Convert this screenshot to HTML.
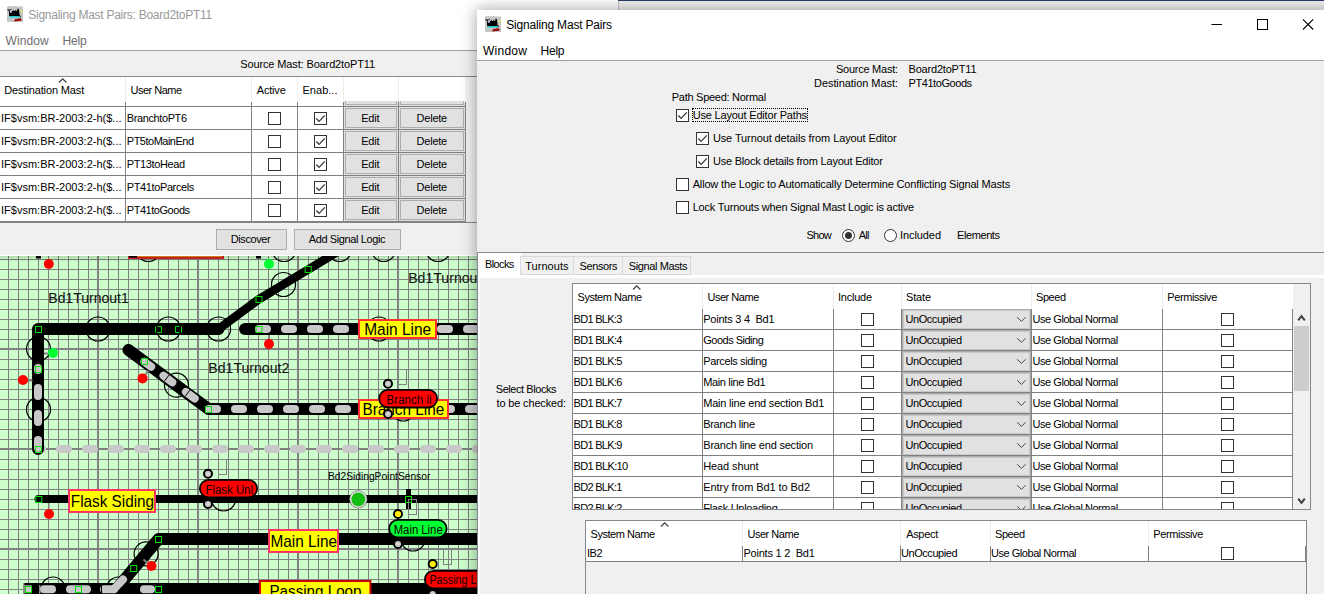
<!DOCTYPE html>
<html><head><meta charset="utf-8"><title>Signaling Mast Pairs</title>
<style>
html,body{margin:0;padding:0}
body{width:1324px;height:594px;overflow:hidden;position:relative;background:#fff;font-family:"Liberation Sans",sans-serif}
div{position:absolute}
.t{position:absolute;white-space:pre;line-height:1}
.cb{width:11px;height:11px;border:1px solid #333;background:#fff}
.rd{width:11px;height:11px;border:1px solid #333;background:#fff;border-radius:50%}
.rd i{position:absolute;left:2px;top:2px;width:7px;height:7px;border-radius:50%;background:#333}
#lay text{font-family:"Liberation Sans",sans-serif}
</style></head><body>
<div style="left:0px;top:0px;width:477px;height:30px;background:#fff;"></div>
<svg style="position:absolute;left:7px;top:6px" width="16" height="16" viewBox="0 0 16 16">
<rect width="16" height="16" fill="#c6c6c6"/>
<rect width="16" height="1" fill="#e4e4e4"/>
<path d="M1 0h1v.6h-1zM3.3 0h1v.6h-1zM5.6 0h1v.6h-1zM8 0h1.4v.6h-1.4z" fill="#8a8a8a"/>
<path d="M0.2 3h4.9v1h-4.9z" fill="#5a5a5a"/>
<path d="M0.8 4h2.4v1h-2.4zM10.2 2.7h1.6v.8h-1.6z" fill="#3a3a3a"/>
<path d="M2 6.8 L2.2 5 L3 5 L3 6.6 L4.7 6.6 L4.8 5 L5.7 5 L6.3 3.8 L7 5 L8 5 L8.7 3.8 L9.4 5 L10.2 5 L10.2 3.3 L12 3.3 L12.2 5.5 L12.6 8.8 L13.9 10.5 L13.4 11.2 L12 10.2 L2.2 10.2 Z" fill="#000"/>
<rect x="2.9" y="4.8" width="1.7" height="1.7" fill="#b9b9ff"/>
<rect x="13" y="5" width="3" height="1" fill="#f0f032"/>
<path d="M2.4 10.2h2.2v1.5h-2.2zM5.2 10.2h2.2v1.5h-2.2zM8 10.2h2.2v1.5h-2.2zM10.8 10.2h1.8v1.5h-1.8z" fill="#00e6e6"/>
<path d="M7.2 14.6 L8.4 13 L9.2 12.4 L10 13.4 L10.6 12.4 L12.4 12.2 L14.4 12.6 L14.6 14.8 L9 15.2 L7.4 15.6Z" fill="#a00c0c"/>
</svg>
<span class="t" style="left:28.3px;top:9px;font-size:12px;letter-spacing:-0.259px;color:#999;">Signaling Mast Pairs: Board2toPT11</span>
<div style="left:0px;top:30px;width:477px;height:20px;background:#fff;"></div>
<span class="t" style="left:5.5px;top:35px;font-size:12px;letter-spacing:0.108px;color:#6d6d6d;">Window</span>
<span class="t" style="left:62.5px;top:35px;font-size:12px;letter-spacing:-0.145px;color:#6d6d6d;">Help</span>
<div style="left:0px;top:50px;width:477px;height:1px;background:#a0a0a0;"></div>
<div style="left:0px;top:51px;width:477px;height:205px;background:#f0f0f0;"></div>
<span class="t" style="left:240.3px;top:59px;font-size:11px;letter-spacing:-0.133px;color:#000;">Source Mast: Board2toPT11</span>
<div style="left:0px;top:76px;width:477px;height:1px;background:#828790;"></div>
<div style="left:0px;top:77px;width:465px;height:25px;background:#fff;"></div>
<div style="left:125px;top:77px;width:1px;height:24px;background:#ececec;"></div>
<div style="left:251px;top:77px;width:1px;height:24px;background:#ececec;"></div>
<div style="left:297px;top:77px;width:1px;height:24px;background:#ececec;"></div>
<div style="left:343px;top:77px;width:1px;height:24px;background:#ececec;"></div>
<div style="left:398px;top:77px;width:1px;height:24px;background:#ececec;"></div>
<span class="t" style="left:4.3px;top:85px;font-size:11px;letter-spacing:-0.129px;color:#000;">Destination Mast</span>
<span class="t" style="left:130.5px;top:85px;font-size:11px;letter-spacing:-0.516px;color:#000;">User Name</span>
<span class="t" style="left:256.8px;top:85px;font-size:11px;letter-spacing:-0.191px;color:#000;">Active</span>
<span class="t" style="left:302.5px;top:85px;font-size:11px;letter-spacing:0.023px;color:#000;">Enab...</span>
<svg style="position:absolute;left:58px;top:77px" width="10" height="7" viewBox="0 0 10 7"><polyline points="1,5.5 4.7,1.8 8.4,5.5" fill="none" stroke="#3c3c3c" stroke-width="1.15"/></svg>
<div style="left:0px;top:101px;width:466px;height:121px;background:#fff;"></div>
<div style="left:344px;top:101px;width:121px;height:120px;background:#e1e1e1;"></div>
<div style="left:0px;top:106px;width:466px;height:1px;background:#808080;"></div>
<div style="left:0px;top:129px;width:466px;height:1px;background:#808080;"></div>
<div style="left:0px;top:152px;width:466px;height:1px;background:#808080;"></div>
<div style="left:0px;top:175px;width:466px;height:1px;background:#808080;"></div>
<div style="left:0px;top:198px;width:466px;height:1px;background:#808080;"></div>
<div style="left:0px;top:221px;width:466px;height:1px;background:#808080;"></div>
<div style="left:125px;top:102px;width:1px;height:120px;background:#808080;"></div>
<div style="left:251px;top:102px;width:1px;height:120px;background:#808080;"></div>
<div style="left:297px;top:102px;width:1px;height:120px;background:#808080;"></div>
<div style="left:343px;top:102px;width:1px;height:120px;background:#808080;"></div>
<div style="left:398px;top:102px;width:1px;height:120px;background:#808080;"></div>
<div style="left:465px;top:102px;width:1px;height:120px;background:#808080;"></div>
<div style="left:0px;top:222px;width:477px;height:1px;background:#828790;"></div>
<div style="left:345px;top:101px;width:52px;height:4px;background:#e1e1e1;border:1px solid #adadad;border-top:none;box-sizing:border-box"></div>
<div style="left:400px;top:101px;width:64px;height:4px;background:#e1e1e1;border:1px solid #adadad;border-top:none;box-sizing:border-box"></div>
<span class="t" style="left:1.0px;top:113px;font-size:11px;letter-spacing:0.003px;color:#000;">IF$vsm:BR-2003:2-h($...</span>
<span class="t" style="left:126.8px;top:113px;font-size:11px;letter-spacing:-0.395px;color:#000;">BranchtoPT6</span>
<div class="cb" style="left:268px;top:112px"></div>
<div class="cb" style="left:314px;top:112px"><svg width="13" height="13" viewBox="0 0 13 13" style="position:absolute;left:-1px;top:-1px"><polyline points="2.3,6.6 5.1,9.4 10.8,3.4" fill="none" stroke="#3a3a3a" stroke-width="1.35"/></svg></div>
<div style="left:345px;top:108px;width:52px;height:20px;background:#e1e1e1;border:1px solid #adadad;box-sizing:border-box"></div>
<div style="left:400px;top:108px;width:64px;height:20px;background:#e1e1e1;border:1px solid #adadad;box-sizing:border-box"></div>
<span class="t" style="left:361.2px;top:113px;font-size:11px;letter-spacing:-0.218px;color:#000;">Edit</span>
<span class="t" style="left:416.6px;top:113px;font-size:11px;letter-spacing:-0.240px;color:#000;">Delete</span>
<span class="t" style="left:1.0px;top:136px;font-size:11px;letter-spacing:0.003px;color:#000;">IF$vsm:BR-2003:2-h($...</span>
<span class="t" style="left:126.8px;top:136px;font-size:11px;letter-spacing:-0.501px;color:#000;">PT5toMainEnd</span>
<div class="cb" style="left:268px;top:135px"></div>
<div class="cb" style="left:314px;top:135px"><svg width="13" height="13" viewBox="0 0 13 13" style="position:absolute;left:-1px;top:-1px"><polyline points="2.3,6.6 5.1,9.4 10.8,3.4" fill="none" stroke="#3a3a3a" stroke-width="1.35"/></svg></div>
<div style="left:345px;top:131px;width:52px;height:20px;background:#e1e1e1;border:1px solid #adadad;box-sizing:border-box"></div>
<div style="left:400px;top:131px;width:64px;height:20px;background:#e1e1e1;border:1px solid #adadad;box-sizing:border-box"></div>
<span class="t" style="left:361.2px;top:136px;font-size:11px;letter-spacing:-0.218px;color:#000;">Edit</span>
<span class="t" style="left:416.6px;top:136px;font-size:11px;letter-spacing:-0.240px;color:#000;">Delete</span>
<span class="t" style="left:1.0px;top:159px;font-size:11px;letter-spacing:0.003px;color:#000;">IF$vsm:BR-2003:2-h($...</span>
<span class="t" style="left:126.8px;top:159px;font-size:11px;letter-spacing:-0.391px;color:#000;">PT13toHead</span>
<div class="cb" style="left:268px;top:158px"></div>
<div class="cb" style="left:314px;top:158px"><svg width="13" height="13" viewBox="0 0 13 13" style="position:absolute;left:-1px;top:-1px"><polyline points="2.3,6.6 5.1,9.4 10.8,3.4" fill="none" stroke="#3a3a3a" stroke-width="1.35"/></svg></div>
<div style="left:345px;top:154px;width:52px;height:20px;background:#e1e1e1;border:1px solid #adadad;box-sizing:border-box"></div>
<div style="left:400px;top:154px;width:64px;height:20px;background:#e1e1e1;border:1px solid #adadad;box-sizing:border-box"></div>
<span class="t" style="left:361.2px;top:159px;font-size:11px;letter-spacing:-0.218px;color:#000;">Edit</span>
<span class="t" style="left:416.6px;top:159px;font-size:11px;letter-spacing:-0.240px;color:#000;">Delete</span>
<span class="t" style="left:1.0px;top:182px;font-size:11px;letter-spacing:0.003px;color:#000;">IF$vsm:BR-2003:2-h($...</span>
<span class="t" style="left:126.8px;top:182px;font-size:11px;letter-spacing:-0.387px;color:#000;">PT41toParcels</span>
<div class="cb" style="left:268px;top:181px"></div>
<div class="cb" style="left:314px;top:181px"><svg width="13" height="13" viewBox="0 0 13 13" style="position:absolute;left:-1px;top:-1px"><polyline points="2.3,6.6 5.1,9.4 10.8,3.4" fill="none" stroke="#3a3a3a" stroke-width="1.35"/></svg></div>
<div style="left:345px;top:177px;width:52px;height:20px;background:#e1e1e1;border:1px solid #adadad;box-sizing:border-box"></div>
<div style="left:400px;top:177px;width:64px;height:20px;background:#e1e1e1;border:1px solid #adadad;box-sizing:border-box"></div>
<span class="t" style="left:361.2px;top:182px;font-size:11px;letter-spacing:-0.218px;color:#000;">Edit</span>
<span class="t" style="left:416.6px;top:182px;font-size:11px;letter-spacing:-0.240px;color:#000;">Delete</span>
<span class="t" style="left:1.0px;top:205px;font-size:11px;letter-spacing:0.003px;color:#000;">IF$vsm:BR-2003:2-h($...</span>
<span class="t" style="left:126.8px;top:205px;font-size:11px;letter-spacing:-0.462px;color:#000;">PT41toGoods</span>
<div class="cb" style="left:268px;top:204px"></div>
<div class="cb" style="left:314px;top:204px"><svg width="13" height="13" viewBox="0 0 13 13" style="position:absolute;left:-1px;top:-1px"><polyline points="2.3,6.6 5.1,9.4 10.8,3.4" fill="none" stroke="#3a3a3a" stroke-width="1.35"/></svg></div>
<div style="left:345px;top:200px;width:52px;height:20px;background:#e1e1e1;border:1px solid #adadad;box-sizing:border-box"></div>
<div style="left:400px;top:200px;width:64px;height:20px;background:#e1e1e1;border:1px solid #adadad;box-sizing:border-box"></div>
<span class="t" style="left:361.2px;top:205px;font-size:11px;letter-spacing:-0.218px;color:#000;">Edit</span>
<span class="t" style="left:416.6px;top:205px;font-size:11px;letter-spacing:-0.240px;color:#000;">Delete</span>
<div style="left:216px;top:229px;width:71px;height:21px;background:#e1e1e1;border:1px solid #adadad;box-sizing:border-box"></div>
<div style="left:294px;top:229px;width:107px;height:21px;background:#e1e1e1;border:1px solid #adadad;box-sizing:border-box"></div>
<span class="t" style="left:230.7px;top:234px;font-size:11px;letter-spacing:-0.399px;color:#000;">Discover</span>
<span class="t" style="left:308.8px;top:234px;font-size:11px;letter-spacing:-0.390px;color:#000;">Add Signal Logic</span>
<div style="left:0px;top:255px;width:477px;height:1px;background:#fff;"></div>
<svg id="lay" style="position:absolute;left:0px;top:256px" width="477" height="338" viewBox="0 256 477 338">
<rect x="0" y="256" width="477" height="338" fill="#ccffcc"/>
<path d="M8 256h1v338h-1zM18 256h1v338h-1zM28 256h1v338h-1zM38 256h1v338h-1zM48 256h1v338h-1zM58 256h1v338h-1zM68 256h1v338h-1zM78 256h1v338h-1zM88 256h1v338h-1zM98 256h1v338h-1zM108 256h1v338h-1zM118 256h1v338h-1zM128 256h1v338h-1zM138 256h1v338h-1zM148 256h1v338h-1zM158 256h1v338h-1zM168 256h1v338h-1zM178 256h1v338h-1zM188 256h1v338h-1zM198 256h1v338h-1zM208 256h1v338h-1zM218 256h1v338h-1zM228 256h1v338h-1zM238 256h1v338h-1zM248 256h1v338h-1zM258 256h1v338h-1zM268 256h1v338h-1zM278 256h1v338h-1zM288 256h1v338h-1zM298 256h1v338h-1zM308 256h1v338h-1zM318 256h1v338h-1zM328 256h1v338h-1zM338 256h1v338h-1zM348 256h1v338h-1zM358 256h1v338h-1zM368 256h1v338h-1zM378 256h1v338h-1zM388 256h1v338h-1zM398 256h1v338h-1zM408 256h1v338h-1zM418 256h1v338h-1zM428 256h1v338h-1zM438 256h1v338h-1zM448 256h1v338h-1zM458 256h1v338h-1zM468 256h1v338h-1zM0 259h477v1h-477zM0 269h477v1h-477zM0 279h477v1h-477zM0 289h477v1h-477zM0 299h477v1h-477zM0 309h477v1h-477zM0 319h477v1h-477zM0 329h477v1h-477zM0 339h477v1h-477zM0 349h477v1h-477zM0 359h477v1h-477zM0 369h477v1h-477zM0 379h477v1h-477zM0 389h477v1h-477zM0 399h477v1h-477zM0 409h477v1h-477zM0 419h477v1h-477zM0 429h477v1h-477zM0 439h477v1h-477zM0 449h477v1h-477zM0 459h477v1h-477zM0 469h477v1h-477zM0 479h477v1h-477zM0 489h477v1h-477zM0 499h477v1h-477zM0 509h477v1h-477zM0 519h477v1h-477zM0 529h477v1h-477zM0 539h477v1h-477zM0 549h477v1h-477zM0 559h477v1h-477zM0 569h477v1h-477zM0 579h477v1h-477zM0 589h477v1h-477zM97 256h1v338h-1zM197 256h1v338h-1zM297 256h1v338h-1zM397 256h1v338h-1zM0 348h477v1h-477zM0 448h477v1h-477zM0 548h477v1h-477z" fill="#808080" shape-rendering="crispEdges"/>
<line x1="40" y1="449" x2="42" y2="449" stroke="#c8c8c8" stroke-width="8" stroke-linecap="round"/>
<line x1="60" y1="449.0" x2="68" y2="449.0" stroke="#c8c8c8" stroke-width="8" stroke-linecap="round"/>
<line x1="86" y1="449.0" x2="94" y2="449.0" stroke="#c8c8c8" stroke-width="8" stroke-linecap="round"/>
<line x1="112" y1="449.0" x2="120" y2="449.0" stroke="#c8c8c8" stroke-width="8" stroke-linecap="round"/>
<line x1="138" y1="449.0" x2="146" y2="449.0" stroke="#c8c8c8" stroke-width="8" stroke-linecap="round"/>
<line x1="164" y1="449.0" x2="172" y2="449.0" stroke="#c8c8c8" stroke-width="8" stroke-linecap="round"/>
<line x1="190" y1="449.0" x2="198" y2="449.0" stroke="#c8c8c8" stroke-width="8" stroke-linecap="round"/>
<line x1="216" y1="449.0" x2="224" y2="449.0" stroke="#c8c8c8" stroke-width="8" stroke-linecap="round"/>
<line x1="242" y1="449.0" x2="250" y2="449.0" stroke="#c8c8c8" stroke-width="8" stroke-linecap="round"/>
<line x1="268" y1="449.0" x2="276" y2="449.0" stroke="#c8c8c8" stroke-width="8" stroke-linecap="round"/>
<line x1="294" y1="449.0" x2="302" y2="449.0" stroke="#c8c8c8" stroke-width="8" stroke-linecap="round"/>
<line x1="320" y1="449.0" x2="328" y2="449.0" stroke="#c8c8c8" stroke-width="8" stroke-linecap="round"/>
<line x1="346" y1="449.0" x2="354" y2="449.0" stroke="#c8c8c8" stroke-width="8" stroke-linecap="round"/>
<line x1="372" y1="449.0" x2="380" y2="449.0" stroke="#c8c8c8" stroke-width="8" stroke-linecap="round"/>
<line x1="398" y1="449.0" x2="406" y2="449.0" stroke="#c8c8c8" stroke-width="8" stroke-linecap="round"/>
<line x1="424" y1="449.0" x2="432" y2="449.0" stroke="#c8c8c8" stroke-width="8" stroke-linecap="round"/>
<line x1="450" y1="449.0" x2="458" y2="449.0" stroke="#c8c8c8" stroke-width="8" stroke-linecap="round"/>
<line x1="476" y1="449.0" x2="484" y2="449.0" stroke="#c8c8c8" stroke-width="8" stroke-linecap="round"/>
<circle cx="98" cy="329" r="12" fill="none" stroke="#000" stroke-width="1.2"/>
<circle cx="168.4" cy="329" r="12" fill="none" stroke="#000" stroke-width="1.2"/>
<circle cx="218.6" cy="329" r="12" fill="none" stroke="#000" stroke-width="1.2"/>
<circle cx="38.5" cy="348.8" r="12" fill="none" stroke="#000" stroke-width="1.2"/>
<circle cx="38.5" cy="409.5" r="12" fill="none" stroke="#000" stroke-width="1.2"/>
<circle cx="283.5" cy="284.5" r="12" fill="none" stroke="#000" stroke-width="1.2"/>
<circle cx="379" cy="329" r="12" fill="none" stroke="#000" stroke-width="1.2"/>
<circle cx="176.5" cy="385.2" r="12" fill="none" stroke="#000" stroke-width="1.2"/>
<circle cx="403.3" cy="409" r="12" fill="none" stroke="#000" stroke-width="1.2"/>
<circle cx="223.6" cy="499" r="12" fill="none" stroke="#000" stroke-width="1.2"/>
<circle cx="413" cy="539" r="12" fill="none" stroke="#000" stroke-width="1.2"/>
<circle cx="53" cy="589" r="12" fill="none" stroke="#000" stroke-width="1.2"/>
<circle cx="118.5" cy="589" r="12" fill="none" stroke="#000" stroke-width="1.2"/>
<circle cx="146.1" cy="553.8" r="12" fill="none" stroke="#000" stroke-width="1.2"/>
<circle cx="148.4" cy="249.5" r="12" fill="none" stroke="#000" stroke-width="1.2"/>
<circle cx="284" cy="249.5" r="12" fill="none" stroke="#000" stroke-width="1.2"/>
<circle cx="339.4" cy="249.5" r="12" fill="none" stroke="#000" stroke-width="1.2"/>
<circle cx="383.6" cy="249.5" r="12" fill="none" stroke="#000" stroke-width="1.2"/>
<circle cx="438" cy="249.5" r="12" fill="none" stroke="#000" stroke-width="1.2"/>
<rect x="36" y="256" width="5" height="2.5" fill="#000"/>
<rect x="256" y="256" width="5" height="2.5" fill="#000"/>
<polyline points="38,449 38,329 218.6,329" fill="none" stroke="#000" stroke-width="12" stroke-linecap="round" stroke-linejoin="round"/>
<polyline points="218.6,329 258.5,299.5 308,269.6 345,247.3" fill="none" stroke="#000" stroke-width="8.6" stroke-linecap="round" stroke-linejoin="round"/>
<line x1="38" y1="368" x2="38" y2="370" stroke="#c8c8c8" stroke-width="8" stroke-linecap="round"/>
<line x1="38" y1="388" x2="38" y2="396" stroke="#c8c8c8" stroke-width="8" stroke-linecap="round"/>
<line x1="38" y1="414" x2="38" y2="422" stroke="#c8c8c8" stroke-width="8" stroke-linecap="round"/>
<line x1="38" y1="440" x2="38" y2="448" stroke="#c8c8c8" stroke-width="8" stroke-linecap="round"/>
<polyline points="245,329 480,329" fill="none" stroke="#000" stroke-width="12" stroke-linecap="round" stroke-linejoin="round"/>
<line x1="259" y1="329" x2="267" y2="329" stroke="#c8c8c8" stroke-width="8" stroke-linecap="round"/>
<line x1="285" y1="329" x2="293" y2="329" stroke="#c8c8c8" stroke-width="8" stroke-linecap="round"/>
<line x1="311" y1="329" x2="319" y2="329" stroke="#c8c8c8" stroke-width="8" stroke-linecap="round"/>
<line x1="337" y1="329" x2="345" y2="329" stroke="#c8c8c8" stroke-width="8" stroke-linecap="round"/>
<line x1="363" y1="329" x2="371" y2="329" stroke="#c8c8c8" stroke-width="8" stroke-linecap="round"/>
<line x1="389" y1="329" x2="397" y2="329" stroke="#c8c8c8" stroke-width="8" stroke-linecap="round"/>
<line x1="415" y1="329" x2="423" y2="329" stroke="#c8c8c8" stroke-width="8" stroke-linecap="round"/>
<line x1="441" y1="329" x2="449" y2="329" stroke="#c8c8c8" stroke-width="8" stroke-linecap="round"/>
<line x1="467" y1="329" x2="475" y2="329" stroke="#c8c8c8" stroke-width="8" stroke-linecap="round"/>
<polyline points="128.5,350 208.5,409 480,409" fill="none" stroke="#000" stroke-width="12" stroke-linecap="round" stroke-linejoin="round"/>
<line x1="209" y1="409" x2="217" y2="409" stroke="#c8c8c8" stroke-width="8" stroke-linecap="round"/>
<line x1="235" y1="409" x2="243" y2="409" stroke="#c8c8c8" stroke-width="8" stroke-linecap="round"/>
<line x1="261" y1="409" x2="269" y2="409" stroke="#c8c8c8" stroke-width="8" stroke-linecap="round"/>
<line x1="287" y1="409" x2="295" y2="409" stroke="#c8c8c8" stroke-width="8" stroke-linecap="round"/>
<line x1="313" y1="409" x2="321" y2="409" stroke="#c8c8c8" stroke-width="8" stroke-linecap="round"/>
<line x1="339" y1="409" x2="347" y2="409" stroke="#c8c8c8" stroke-width="8" stroke-linecap="round"/>
<line x1="365" y1="409" x2="373" y2="409" stroke="#c8c8c8" stroke-width="8" stroke-linecap="round"/>
<line x1="391" y1="409" x2="399" y2="409" stroke="#c8c8c8" stroke-width="8" stroke-linecap="round"/>
<line x1="417" y1="409" x2="425" y2="409" stroke="#c8c8c8" stroke-width="8" stroke-linecap="round"/>
<line x1="443" y1="409" x2="451" y2="409" stroke="#c8c8c8" stroke-width="8" stroke-linecap="round"/>
<line x1="469" y1="409" x2="477" y2="409" stroke="#c8c8c8" stroke-width="8" stroke-linecap="round"/>
<line x1="144.38" y1="361.67" x2="151.22" y2="366.73" stroke="#c8c8c8" stroke-width="8" stroke-linecap="round"/>
<line x1="163.48" y1="375.73" x2="172.32" y2="382.27" stroke="#c8c8c8" stroke-width="8" stroke-linecap="round"/>
<line x1="185.88" y1="391.93" x2="194.72" y2="398.47" stroke="#c8c8c8" stroke-width="8" stroke-linecap="round"/>
<line x1="164.5" y1="381" x2="169.5" y2="374.5" stroke="#000" stroke-width="1"/>
<line x1="185" y1="396.5" x2="190" y2="390" stroke="#000" stroke-width="1"/>
<polyline points="38.5,499 480,499" fill="none" stroke="#000" stroke-width="8" stroke-linecap="round" stroke-linejoin="round"/>
<polyline points="116.5,589 158.5,539 480,539" fill="none" stroke="#000" stroke-width="12" stroke-linecap="round" stroke-linejoin="round"/>
<rect x="23" y="583" width="460" height="12" fill="#000"/>
<rect x="23" y="583" width="1.5" height="12" fill="#909090"/>
<rect x="24.5" y="585.3" width="7" height="8" fill="#c8c8c8"/>
<line x1="44" y1="589.3" x2="52" y2="589.3" stroke="#c8c8c8" stroke-width="8" stroke-linecap="round"/>
<line x1="70" y1="589.3" x2="87" y2="589.3" stroke="#c8c8c8" stroke-width="8" stroke-linecap="round"/>
<line x1="104" y1="589.3" x2="114" y2="589.3" stroke="#c8c8c8" stroke-width="8" stroke-linecap="round"/>
<line x1="144" y1="589.3" x2="151" y2="589.3" stroke="#c8c8c8" stroke-width="8" stroke-linecap="round"/>
<line x1="114" y1="589" x2="123" y2="579.5" stroke="#c8c8c8" stroke-width="8" stroke-linecap="round"/>
<line x1="39.8" y1="585" x2="39.8" y2="594" stroke="#c8c8c8" stroke-width="1"/>
<line x1="101.5" y1="585" x2="101.5" y2="594" stroke="#000" stroke-width="1"/>
<rect x="128" y="253" width="96" height="6" fill="#d82020"/><rect x="130" y="253" width="92" height="3.6" fill="#e8d820"/><rect x="129" y="256" width="8" height="1.6" fill="#000"/>
<rect x="35.5" y="326.5" width="6" height="6" fill="none" stroke="#00e000" stroke-width="1"/>
<rect x="35.5" y="366.5" width="6" height="6" fill="none" stroke="#00e000" stroke-width="1"/>
<rect x="35.5" y="446.5" width="6" height="6" fill="none" stroke="#00e000" stroke-width="1"/>
<rect x="141.5" y="358.5" width="6" height="6" fill="none" stroke="#00e000" stroke-width="1"/>
<rect x="205.5" y="406.5" width="6" height="6" fill="none" stroke="#00e000" stroke-width="1"/>
<rect x="256" y="296.5" width="6" height="6" fill="none" stroke="#00e000" stroke-width="1"/>
<rect x="305.2" y="266.5" width="6" height="6" fill="none" stroke="#00e000" stroke-width="1"/>
<rect x="256" y="326.5" width="6" height="6" fill="none" stroke="#00e000" stroke-width="1"/>
<rect x="35.8" y="496.5" width="6" height="6" fill="none" stroke="#00e000" stroke-width="1"/>
<rect x="155.5" y="536.5" width="6" height="6" fill="none" stroke="#00e000" stroke-width="1"/>
<rect x="130.7" y="565.5" width="6" height="6" fill="none" stroke="#00e000" stroke-width="1"/>
<rect x="25.5" y="586.5" width="6" height="6" fill="none" stroke="#00e000" stroke-width="1"/>
<rect x="75.5" y="586.5" width="6" height="6" fill="none" stroke="#00e000" stroke-width="1"/>
<rect x="155.5" y="586.5" width="6" height="6" fill="none" stroke="#00e000" stroke-width="1"/>
<rect x="405.5" y="496.5" width="6" height="6" fill="none" stroke="#00e000" stroke-width="1"/>
<path d="M155.5 326.5v6M157.5 326.5h4v6h-4" fill="none" stroke="#00e000" stroke-width="1"/>
<path d="M181.5 326.5v6M179.5 326.5h-4v6h4" fill="none" stroke="#00e000" stroke-width="1"/>
<line x1="44" y1="353.5" x2="49" y2="353.5" stroke="#808080" stroke-width="2"/>
<circle cx="53" cy="353" r="5" fill="#00ff33"/>
<line x1="27" y1="380.5" x2="32.5" y2="380.5" stroke="#808080" stroke-width="2"/>
<circle cx="23" cy="380" r="5" fill="#ff0000"/>
<circle cx="48.8" cy="264" r="5" fill="#ff0000"/>
<circle cx="269" cy="264" r="5" fill="#00ff33"/>
<line x1="269" y1="335" x2="269" y2="340" stroke="#808080" stroke-width="2"/>
<circle cx="269" cy="344" r="5" fill="#ff0000"/>
<line x1="145.5" y1="374.5" x2="148.3" y2="370.5" stroke="#808080" stroke-width="2"/>
<circle cx="142.5" cy="378.4" r="5" fill="#ff0000"/>
<line x1="49" y1="503" x2="49" y2="510" stroke="#808080" stroke-width="1"/>
<circle cx="49" cy="514" r="5" fill="#ff0000"/>
<line x1="143.5" y1="559.5" x2="148" y2="563.5" stroke="#808080" stroke-width="2"/>
<circle cx="151.5" cy="566" r="5" fill="#ff0000"/>
<rect x="406" y="489" width="5" height="20" fill="#000"/>
<rect x="405.5" y="496.5" width="6" height="6" fill="none" stroke="#00e000" stroke-width="1"/>
<path d="M398.5 369.5h8v15h-8" fill="none" stroke="#808080" stroke-width="1"/>
<path d="M218.5 459.5h8v15h-8" fill="none" stroke="#808080" stroke-width="1"/>
<rect x="408.5" y="499.5" width="8" height="15" fill="none" stroke="#808080" stroke-width="1"/>
<rect x="443.5" y="549.5" width="8" height="15" fill="none" stroke="#808080" stroke-width="1"/>
<rect x="359.0" y="320.0" width="77" height="18" fill="#ffff00" stroke="#ff3333" stroke-width="2"/>
<text x="364.2" y="335" font-size="16.2" fill="#000" textLength="67" lengthAdjust="spacingAndGlyphs">Main Line</text>
<rect x="359.0" y="400.0" width="89" height="18" fill="#ffff00" stroke="#ff3333" stroke-width="2"/>
<text x="362.5" y="415" font-size="16.2" fill="#000" textLength="81.8" lengthAdjust="spacingAndGlyphs">Branch Line</text>
<rect x="69.0" y="490.0" width="86" height="22" fill="#ffff00" stroke="#ff3366" stroke-width="2"/>
<text x="70.8" y="507" font-size="16.2" fill="#000" textLength="83.3" lengthAdjust="spacingAndGlyphs">Flask Siding</text>
<rect x="269.0" y="530.0" width="69" height="22" fill="#ffff00" stroke="#ff3366" stroke-width="2"/>
<text x="270.4" y="546.5" font-size="16.2" fill="#000" textLength="66.6" lengthAdjust="spacingAndGlyphs">Main Line</text>
<rect x="260.0" y="581.0" width="110.4" height="18" fill="#ffff00" stroke="#cc0000" stroke-width="2"/>
<text x="269.5" y="597" font-size="16.2" fill="#000" textLength="92" lengthAdjust="spacingAndGlyphs">Passing Loop</text>
<text x="48.3" y="302.5" font-size="14" fill="#111" textLength="80.5" lengthAdjust="spacingAndGlyphs">Bd1Turnout1</text>
<text x="208.3" y="372.5" font-size="14" fill="#111" textLength="81" lengthAdjust="spacingAndGlyphs">Bd1Turnout2</text>
<text x="408.2" y="282.5" font-size="14" fill="#111" textLength="81" lengthAdjust="spacingAndGlyphs">Bd1Turnout3</text>
<text x="328" y="480" font-size="11" fill="#000" textLength="102.3" lengthAdjust="spacingAndGlyphs">Bd2SidingPointSensor</text>
<circle cx="358.3" cy="499.3" r="9" fill="#707870"/>
<circle cx="358.3" cy="499.3" r="8.4" fill="#dcdcdc"/>
<circle cx="358.3" cy="499.3" r="6.9" fill="#12be12"/>
<circle cx="388" cy="383.8" r="4.05" fill="#c0c0c0" stroke="#000" stroke-width="1.9"/>
<path d="M386 383.8L388 381.8L390 383.8L388 385.8z" fill="#d8d8d8"/>
<circle cx="388" cy="414" r="4.05" fill="#c0c0c0" stroke="#000" stroke-width="1.9"/>
<path d="M386 414L388 412L390 414L388 416z" fill="#d8d8d8"/>
<rect x="379.2" y="389.9" width="57.900000000000006" height="17.599999999999998" rx="8.799999999999999" fill="#ff0000" stroke="#000" stroke-width="1.8"/>
<text x="386.6" y="403.7" font-size="12" fill="#100" textLength="45" lengthAdjust="spacingAndGlyphs">Branch li</text>
<circle cx="208" cy="473.8" r="4.05" fill="#c0c0c0" stroke="#000" stroke-width="1.9"/>
<path d="M206 473.8L208 471.8L210 473.8L208 475.8z" fill="#d8d8d8"/>
<circle cx="208" cy="504" r="4.05" fill="#c0c0c0" stroke="#000" stroke-width="1.9"/>
<path d="M206 504L208 502L210 504L208 506z" fill="#d8d8d8"/>
<rect x="199.9" y="479.9" width="57.2" height="17.599999999999998" rx="8.799999999999999" fill="#ff0000" stroke="#000" stroke-width="1.8"/>
<text x="205.5" y="493.7" font-size="12" fill="#100" textLength="47.5" lengthAdjust="spacingAndGlyphs">Flask Unl</text>
<circle cx="398" cy="514" r="4.05" fill="#ffee00" stroke="#000" stroke-width="1.9"/>
<circle cx="398" cy="544" r="4.05" fill="#c0c0c0" stroke="#000" stroke-width="1.9"/>
<path d="M396 544L398 542L400 544L398 546z" fill="#d8d8d8"/>
<rect x="389.2" y="519.9" width="57.400000000000006" height="17.599999999999998" rx="8.799999999999999" fill="#00ff33" stroke="#000" stroke-width="1.8"/>
<text x="393.7" y="533.6" font-size="12" fill="#100" textLength="49" lengthAdjust="spacingAndGlyphs">Main Line</text>
<circle cx="432.7" cy="564" r="4.05" fill="#ffee00" stroke="#000" stroke-width="1.9"/>
<circle cx="432.7" cy="594" r="4.05" fill="#c0c0c0" stroke="#000" stroke-width="1.9"/>
<path d="M430.7 594L432.7 592L434.7 594L432.7 596z" fill="#d8d8d8"/>
<rect x="424.9" y="570.9" width="68.2" height="17.599999999999998" rx="8.799999999999999" fill="#ff0000" stroke="#000" stroke-width="1.8"/>
<text x="429.4" y="583.8" font-size="12" fill="#100" textLength="47" lengthAdjust="spacingAndGlyphs">Passing L</text>
<defs><linearGradient id="tsh" x1="0" y1="0" x2="0" y2="1"><stop offset="0" stop-color="#000" stop-opacity=".13"/><stop offset="1" stop-color="#000" stop-opacity="0"/></linearGradient></defs><rect x="0" y="256" width="477" height="6" fill="url(#tsh)"/>
</svg>
<div style="left:618px;top:0px;width:706px;height:10px;background:#f2f2f2;"></div>
<div style="left:618px;top:0px;width:1px;height:10px;background:#c8c8c8;"></div>
<div style="left:618px;top:0px;width:706px;height:1px;background:#2b3a6b;"></div>
<div id="rw" style="left:477px;top:10px;width:860px;height:600px;background:#f0f0f0;box-shadow:0 0 14px 1px rgba(0,0,0,.34)">
</div>
<div style="left:477px;top:10px;width:847px;height:50px;background:#fff;"></div>
<svg style="position:absolute;left:485px;top:16px" width="16" height="16" viewBox="0 0 16 16">
<rect width="16" height="16" fill="#c6c6c6"/>
<rect width="16" height="1" fill="#e4e4e4"/>
<path d="M1 0h1v.6h-1zM3.3 0h1v.6h-1zM5.6 0h1v.6h-1zM8 0h1.4v.6h-1.4z" fill="#8a8a8a"/>
<path d="M0.2 3h4.9v1h-4.9z" fill="#5a5a5a"/>
<path d="M0.8 4h2.4v1h-2.4zM10.2 2.7h1.6v.8h-1.6z" fill="#3a3a3a"/>
<path d="M2 6.8 L2.2 5 L3 5 L3 6.6 L4.7 6.6 L4.8 5 L5.7 5 L6.3 3.8 L7 5 L8 5 L8.7 3.8 L9.4 5 L10.2 5 L10.2 3.3 L12 3.3 L12.2 5.5 L12.6 8.8 L13.9 10.5 L13.4 11.2 L12 10.2 L2.2 10.2 Z" fill="#000"/>
<rect x="2.9" y="4.8" width="1.7" height="1.7" fill="#b9b9ff"/>
<rect x="13" y="5" width="3" height="1" fill="#f0f032"/>
<path d="M2.4 10.2h2.2v1.5h-2.2zM5.2 10.2h2.2v1.5h-2.2zM8 10.2h2.2v1.5h-2.2zM10.8 10.2h1.8v1.5h-1.8z" fill="#00e6e6"/>
<path d="M7.2 14.6 L8.4 13 L9.2 12.4 L10 13.4 L10.6 12.4 L12.4 12.2 L14.4 12.6 L14.6 14.8 L9 15.2 L7.4 15.6Z" fill="#a00c0c"/>
</svg>
<span class="t" style="left:506.3px;top:19px;font-size:12px;letter-spacing:-0.191px;color:#000;">Signaling Mast Pairs</span>
<span class="t" style="left:483.0px;top:45px;font-size:12px;letter-spacing:0.258px;color:#000;">Window</span>
<span class="t" style="left:540.5px;top:45px;font-size:12px;letter-spacing:-0.228px;color:#000;">Help</span>
<div style="left:477px;top:60px;width:847px;height:1px;background:#a0a0a0;"></div>
<svg style="position:absolute;left:1200px;top:10px" width="124" height="30" viewBox="0 0 124 30">
<line x1="11.5" y1="14.5" x2="22" y2="14.5" stroke="#000" stroke-width="1"/>
<rect x="57.5" y="9.5" width="10" height="10" fill="none" stroke="#000" stroke-width="1"/>
<path d="M103 9.3 L113.2 19.5 M113.2 9.3 L103 19.5" stroke="#000" stroke-width="1.1" fill="none"/>
</svg>
<span class="t" style="left:836.0px;top:64px;font-size:11px;letter-spacing:-0.255px;color:#000;">Source Mast:</span>
<span class="t" style="left:908.5px;top:64px;font-size:11px;letter-spacing:-0.193px;color:#000;">Board2toPT11</span>
<span class="t" style="left:814.0px;top:78px;font-size:11px;letter-spacing:-0.062px;color:#000;">Destination Mast:</span>
<span class="t" style="left:908.5px;top:78px;font-size:11px;letter-spacing:-0.427px;color:#000;">PT41toGoods</span>
<span class="t" style="left:671.8px;top:92px;font-size:11px;letter-spacing:-0.280px;color:#000;">Path Speed: Normal</span>
<div class="cb" style="left:676px;top:109px"><svg width="13" height="13" viewBox="0 0 13 13" style="position:absolute;left:-1px;top:-1px"><polyline points="2.3,6.6 5.1,9.4 10.8,3.4" fill="none" stroke="#3a3a3a" stroke-width="1.35"/></svg></div>
<span class="t" style="left:692.7px;top:110px;font-size:11px;letter-spacing:-0.192px;color:#000;">Use Layout Editor Paths</span>
<div style="left:692px;top:108px;width:116px;height:14px;border:1px dotted #000;box-sizing:border-box"></div>
<div class="cb" style="left:696px;top:132px"><svg width="13" height="13" viewBox="0 0 13 13" style="position:absolute;left:-1px;top:-1px"><polyline points="2.3,6.6 5.1,9.4 10.8,3.4" fill="none" stroke="#3a3a3a" stroke-width="1.35"/></svg></div>
<span class="t" style="left:712.9px;top:133px;font-size:11px;letter-spacing:-0.106px;color:#000;">Use Turnout details from Layout Editor</span>
<div class="cb" style="left:696px;top:155px"><svg width="13" height="13" viewBox="0 0 13 13" style="position:absolute;left:-1px;top:-1px"><polyline points="2.3,6.6 5.1,9.4 10.8,3.4" fill="none" stroke="#3a3a3a" stroke-width="1.35"/></svg></div>
<span class="t" style="left:712.9px;top:156px;font-size:11px;letter-spacing:-0.209px;color:#000;">Use Block details from Layout Editor</span>
<div class="cb" style="left:676px;top:178px"></div>
<span class="t" style="left:692.7px;top:179px;font-size:11px;letter-spacing:-0.164px;color:#000;">Allow the Logic to Automatically Determine Conflicting Signal Masts</span>
<div class="cb" style="left:676px;top:201px"></div>
<span class="t" style="left:692.7px;top:202px;font-size:11px;letter-spacing:-0.214px;color:#000;">Lock Turnouts when Signal Mast Logic is active</span>
<span class="t" style="left:806.5px;top:230px;font-size:11px;letter-spacing:-0.781px;color:#000;">Show</span>
<div class="rd" style="left:842px;top:229px"><i></i></div>
<span class="t" style="left:858.7px;top:230px;font-size:11px;letter-spacing:-0.761px;color:#000;">All</span>
<div class="rd" style="left:884px;top:229px"></div>
<span class="t" style="left:900.0px;top:230px;font-size:11px;letter-spacing:-0.084px;color:#000;">Included</span>
<span class="t" style="left:957.0px;top:230px;font-size:11px;letter-spacing:-0.407px;color:#000;">Elements</span>
<div style="left:477px;top:252px;width:847px;height:1px;background:#828790;"></div>
<div style="left:477px;top:252px;width:1px;height:342px;background:#828790;"></div>
<div style="left:478px;top:253px;width:846px;height:341px;background:#fff;"></div>
<div style="left:521px;top:253px;width:803px;height:22px;background:#f0f0f0;"></div>
<div style="left:480px;top:278px;width:844px;height:316px;background:#f0f0f0;"></div>
<div style="left:520px;top:256px;width:54px;height:19px;background:#f0f0f0;border:1px solid #d9d9d9;box-sizing:border-box"></div>
<div style="left:573px;top:256px;width:50px;height:19px;background:#f0f0f0;border:1px solid #d9d9d9;box-sizing:border-box"></div>
<div style="left:622px;top:256px;width:69px;height:19px;background:#f0f0f0;border:1px solid #d9d9d9;box-sizing:border-box"></div>
<span class="t" style="left:485.1px;top:259px;font-size:11px;letter-spacing:-0.639px;color:#000;">Blocks</span>
<span class="t" style="left:525.2px;top:261px;font-size:11px;letter-spacing:0.057px;color:#000;">Turnouts</span>
<span class="t" style="left:579.5px;top:261px;font-size:11px;letter-spacing:-0.391px;color:#000;">Sensors</span>
<span class="t" style="left:628.8px;top:261px;font-size:11px;letter-spacing:-0.384px;color:#000;">Signal Masts</span>
<span class="t" style="left:495.8px;top:384px;font-size:11px;letter-spacing:-0.444px;color:#000;">Select Blocks</span>
<span class="t" style="left:496.5px;top:398px;font-size:11px;letter-spacing:-0.157px;color:#000;">to be checked:</span>
<div style="left:572px;top:283px;width:739px;height:227px;background:#f0f0f0;border:1px solid #828790;box-sizing:border-box"></div>
<div style="left:573px;top:284px;width:720px;height:25px;background:#fff;"></div>
<div style="left:702px;top:284px;width:1px;height:24px;background:#ececec;"></div>
<div style="left:833px;top:284px;width:1px;height:24px;background:#ececec;"></div>
<div style="left:901px;top:284px;width:1px;height:24px;background:#ececec;"></div>
<div style="left:1031px;top:284px;width:1px;height:24px;background:#ececec;"></div>
<div style="left:1162px;top:284px;width:1px;height:24px;background:#ececec;"></div>
<svg style="position:absolute;left:632px;top:284px" width="10" height="7" viewBox="0 0 10 7"><polyline points="1,5.5 4.7,1.8 8.4,5.5" fill="none" stroke="#3c3c3c" stroke-width="1.15"/></svg>
<span class="t" style="left:577.5px;top:292px;font-size:11px;letter-spacing:-0.457px;color:#000;">System Name</span>
<span class="t" style="left:707.5px;top:292px;font-size:11px;letter-spacing:-0.485px;color:#000;">User Name</span>
<span class="t" style="left:838.0px;top:292px;font-size:11px;letter-spacing:-0.246px;color:#000;">Include</span>
<span class="t" style="left:906.0px;top:292px;font-size:11px;letter-spacing:-0.171px;color:#000;">State</span>
<span class="t" style="left:1036.0px;top:292px;font-size:11px;letter-spacing:-0.453px;color:#000;">Speed</span>
<span class="t" style="left:1167.3px;top:292px;font-size:11px;letter-spacing:-0.421px;color:#000;">Permissive</span>
<div style="left:573px;top:309px;width:720px;height:200px;background:#fff;"></div>
<div style="left:573px;top:309px;width:720px;height:200px;overflow:hidden">
<span class="t" style="left:0.6px;top:5px;font-size:11px;letter-spacing:-0.708px;color:#000;">BD1 BLK:3</span>
<span class="t" style="left:130.25px;top:5px;font-size:11px;letter-spacing:-0.239px;color:#000;">Points 3 4  Bd1</span>
<div class="cb" style="left:288px;top:4px"></div>
<div style="left:329px;top:0px;width:129px;height:21px;background:#e1e1e1;border:1px solid #adadad;box-sizing:border-box;box-shadow:inset 0 0 0 1px #c8c8c8"></div>
<span class="t" style="left:332.5px;top:5px;font-size:11px;letter-spacing:-0.448px;color:#000;">UnOccupied</span>
<svg style="position:absolute;left:443px;top:7px" width="11" height="7" viewBox="0 0 11 7"><polyline points="1.2,1.3 5.4,5.4 9.6,1.3" fill="none" stroke="#444" stroke-width="1"/></svg>
<span class="t" style="left:459.6px;top:5px;font-size:11px;letter-spacing:-0.464px;color:#000;">Use Global Normal</span>
<div class="cb" style="left:648px;top:4px"></div>
<div style="left:0px;top:20px;width:720px;height:1px;background:#808080;"></div>
<span class="t" style="left:0.6px;top:26px;font-size:11px;letter-spacing:-0.708px;color:#000;">BD1 BLK:4</span>
<span class="t" style="left:130.25px;top:26px;font-size:11px;letter-spacing:-0.504px;color:#000;">Goods Siding</span>
<div class="cb" style="left:288px;top:25px"></div>
<div style="left:329px;top:21px;width:129px;height:21px;background:#e1e1e1;border:1px solid #adadad;box-sizing:border-box;box-shadow:inset 0 0 0 1px #c8c8c8"></div>
<span class="t" style="left:332.5px;top:26px;font-size:11px;letter-spacing:-0.448px;color:#000;">UnOccupied</span>
<svg style="position:absolute;left:443px;top:28px" width="11" height="7" viewBox="0 0 11 7"><polyline points="1.2,1.3 5.4,5.4 9.6,1.3" fill="none" stroke="#444" stroke-width="1"/></svg>
<span class="t" style="left:459.6px;top:26px;font-size:11px;letter-spacing:-0.464px;color:#000;">Use Global Normal</span>
<div class="cb" style="left:648px;top:25px"></div>
<div style="left:0px;top:41px;width:720px;height:1px;background:#808080;"></div>
<span class="t" style="left:0.6px;top:47px;font-size:11px;letter-spacing:-0.708px;color:#000;">BD1 BLK:5</span>
<span class="t" style="left:130.25px;top:47px;font-size:11px;letter-spacing:-0.363px;color:#000;">Parcels siding</span>
<div class="cb" style="left:288px;top:46px"></div>
<div style="left:329px;top:42px;width:129px;height:21px;background:#e1e1e1;border:1px solid #adadad;box-sizing:border-box;box-shadow:inset 0 0 0 1px #c8c8c8"></div>
<span class="t" style="left:332.5px;top:47px;font-size:11px;letter-spacing:-0.448px;color:#000;">UnOccupied</span>
<svg style="position:absolute;left:443px;top:49px" width="11" height="7" viewBox="0 0 11 7"><polyline points="1.2,1.3 5.4,5.4 9.6,1.3" fill="none" stroke="#444" stroke-width="1"/></svg>
<span class="t" style="left:459.6px;top:47px;font-size:11px;letter-spacing:-0.464px;color:#000;">Use Global Normal</span>
<div class="cb" style="left:648px;top:46px"></div>
<div style="left:0px;top:62px;width:720px;height:1px;background:#808080;"></div>
<span class="t" style="left:0.6px;top:68px;font-size:11px;letter-spacing:-0.708px;color:#000;">BD1 BLK:6</span>
<span class="t" style="left:130.25px;top:68px;font-size:11px;letter-spacing:-0.367px;color:#000;">Main line Bd1</span>
<div class="cb" style="left:288px;top:67px"></div>
<div style="left:329px;top:63px;width:129px;height:21px;background:#e1e1e1;border:1px solid #adadad;box-sizing:border-box;box-shadow:inset 0 0 0 1px #c8c8c8"></div>
<span class="t" style="left:332.5px;top:68px;font-size:11px;letter-spacing:-0.448px;color:#000;">UnOccupied</span>
<svg style="position:absolute;left:443px;top:70px" width="11" height="7" viewBox="0 0 11 7"><polyline points="1.2,1.3 5.4,5.4 9.6,1.3" fill="none" stroke="#444" stroke-width="1"/></svg>
<span class="t" style="left:459.6px;top:68px;font-size:11px;letter-spacing:-0.464px;color:#000;">Use Global Normal</span>
<div class="cb" style="left:648px;top:67px"></div>
<div style="left:0px;top:83px;width:720px;height:1px;background:#808080;"></div>
<span class="t" style="left:0.6px;top:89px;font-size:11px;letter-spacing:-0.708px;color:#000;">BD1 BLK:7</span>
<span class="t" style="left:130.25px;top:89px;font-size:11px;letter-spacing:-0.207px;color:#000;">Main line end section Bd1</span>
<div class="cb" style="left:288px;top:88px"></div>
<div style="left:329px;top:84px;width:129px;height:21px;background:#e1e1e1;border:1px solid #adadad;box-sizing:border-box;box-shadow:inset 0 0 0 1px #c8c8c8"></div>
<span class="t" style="left:332.5px;top:89px;font-size:11px;letter-spacing:-0.448px;color:#000;">UnOccupied</span>
<svg style="position:absolute;left:443px;top:91px" width="11" height="7" viewBox="0 0 11 7"><polyline points="1.2,1.3 5.4,5.4 9.6,1.3" fill="none" stroke="#444" stroke-width="1"/></svg>
<span class="t" style="left:459.6px;top:89px;font-size:11px;letter-spacing:-0.464px;color:#000;">Use Global Normal</span>
<div class="cb" style="left:648px;top:88px"></div>
<div style="left:0px;top:104px;width:720px;height:1px;background:#808080;"></div>
<span class="t" style="left:0.6px;top:110px;font-size:11px;letter-spacing:-0.708px;color:#000;">BD1 BLK:8</span>
<span class="t" style="left:130.25px;top:110px;font-size:11px;letter-spacing:-0.328px;color:#000;">Branch line</span>
<div class="cb" style="left:288px;top:109px"></div>
<div style="left:329px;top:105px;width:129px;height:21px;background:#e1e1e1;border:1px solid #adadad;box-sizing:border-box;box-shadow:inset 0 0 0 1px #c8c8c8"></div>
<span class="t" style="left:332.5px;top:110px;font-size:11px;letter-spacing:-0.448px;color:#000;">UnOccupied</span>
<svg style="position:absolute;left:443px;top:112px" width="11" height="7" viewBox="0 0 11 7"><polyline points="1.2,1.3 5.4,5.4 9.6,1.3" fill="none" stroke="#444" stroke-width="1"/></svg>
<span class="t" style="left:459.6px;top:110px;font-size:11px;letter-spacing:-0.464px;color:#000;">Use Global Normal</span>
<div class="cb" style="left:648px;top:109px"></div>
<div style="left:0px;top:125px;width:720px;height:1px;background:#808080;"></div>
<span class="t" style="left:0.6px;top:131px;font-size:11px;letter-spacing:-0.708px;color:#000;">BD1 BLK:9</span>
<span class="t" style="left:130.25px;top:131px;font-size:11px;letter-spacing:-0.209px;color:#000;">Branch line end section</span>
<div class="cb" style="left:288px;top:130px"></div>
<div style="left:329px;top:126px;width:129px;height:21px;background:#e1e1e1;border:1px solid #adadad;box-sizing:border-box;box-shadow:inset 0 0 0 1px #c8c8c8"></div>
<span class="t" style="left:332.5px;top:131px;font-size:11px;letter-spacing:-0.448px;color:#000;">UnOccupied</span>
<svg style="position:absolute;left:443px;top:133px" width="11" height="7" viewBox="0 0 11 7"><polyline points="1.2,1.3 5.4,5.4 9.6,1.3" fill="none" stroke="#444" stroke-width="1"/></svg>
<span class="t" style="left:459.6px;top:131px;font-size:11px;letter-spacing:-0.464px;color:#000;">Use Global Normal</span>
<div class="cb" style="left:648px;top:130px"></div>
<div style="left:0px;top:146px;width:720px;height:1px;background:#808080;"></div>
<span class="t" style="left:0.6px;top:152px;font-size:11px;letter-spacing:-0.670px;color:#000;">BD1 BLK:10</span>
<span class="t" style="left:130.25px;top:152px;font-size:11px;letter-spacing:-0.118px;color:#000;">Head shunt</span>
<div class="cb" style="left:288px;top:151px"></div>
<div style="left:329px;top:147px;width:129px;height:21px;background:#e1e1e1;border:1px solid #adadad;box-sizing:border-box;box-shadow:inset 0 0 0 1px #c8c8c8"></div>
<span class="t" style="left:332.5px;top:152px;font-size:11px;letter-spacing:-0.448px;color:#000;">UnOccupied</span>
<svg style="position:absolute;left:443px;top:154px" width="11" height="7" viewBox="0 0 11 7"><polyline points="1.2,1.3 5.4,5.4 9.6,1.3" fill="none" stroke="#444" stroke-width="1"/></svg>
<span class="t" style="left:459.6px;top:152px;font-size:11px;letter-spacing:-0.464px;color:#000;">Use Global Normal</span>
<div class="cb" style="left:648px;top:151px"></div>
<div style="left:0px;top:167px;width:720px;height:1px;background:#808080;"></div>
<span class="t" style="left:0.6px;top:173px;font-size:11px;letter-spacing:-0.708px;color:#000;">BD2 BLK:1</span>
<span class="t" style="left:130.25px;top:173px;font-size:11px;letter-spacing:-0.073px;color:#000;">Entry from Bd1 to Bd2</span>
<div class="cb" style="left:288px;top:172px"></div>
<div style="left:329px;top:168px;width:129px;height:21px;background:#e1e1e1;border:1px solid #adadad;box-sizing:border-box;box-shadow:inset 0 0 0 1px #c8c8c8"></div>
<span class="t" style="left:332.5px;top:173px;font-size:11px;letter-spacing:-0.448px;color:#000;">UnOccupied</span>
<svg style="position:absolute;left:443px;top:175px" width="11" height="7" viewBox="0 0 11 7"><polyline points="1.2,1.3 5.4,5.4 9.6,1.3" fill="none" stroke="#444" stroke-width="1"/></svg>
<span class="t" style="left:459.6px;top:173px;font-size:11px;letter-spacing:-0.464px;color:#000;">Use Global Normal</span>
<div class="cb" style="left:648px;top:172px"></div>
<div style="left:0px;top:188px;width:720px;height:1px;background:#808080;"></div>
<span class="t" style="left:0.6px;top:194px;font-size:11px;letter-spacing:-0.708px;color:#000;">BD2 BLK:2</span>
<span class="t" style="left:130.25px;top:194px;font-size:11px;letter-spacing:-0.312px;color:#000;">Flask Unloading</span>
<div class="cb" style="left:288px;top:193px"></div>
<div style="left:329px;top:189px;width:129px;height:21px;background:#e1e1e1;border:1px solid #adadad;box-sizing:border-box;box-shadow:inset 0 0 0 1px #c8c8c8"></div>
<span class="t" style="left:332.5px;top:194px;font-size:11px;letter-spacing:-0.448px;color:#000;">UnOccupied</span>
<svg style="position:absolute;left:443px;top:196px" width="11" height="7" viewBox="0 0 11 7"><polyline points="1.2,1.3 5.4,5.4 9.6,1.3" fill="none" stroke="#444" stroke-width="1"/></svg>
<span class="t" style="left:459.6px;top:194px;font-size:11px;letter-spacing:-0.464px;color:#000;">Use Global Normal</span>
<div class="cb" style="left:648px;top:193px"></div>
<div style="left:0px;top:209px;width:720px;height:1px;background:#808080;"></div>
<div style="left:129px;top:0px;width:1px;height:200px;background:#808080;"></div>
<div style="left:260px;top:0px;width:1px;height:200px;background:#808080;"></div>
<div style="left:328px;top:0px;width:1px;height:200px;background:#808080;"></div>
<div style="left:458px;top:0px;width:1px;height:200px;background:#808080;"></div>
<div style="left:589px;top:0px;width:1px;height:200px;background:#808080;"></div>
<div style="left:719px;top:0px;width:1px;height:200px;background:#808080;"></div>
</div>
<div style="left:1293px;top:309px;width:17px;height:200px;background:#f0f0f0;"></div>
<div style="left:1294px;top:326px;width:15px;height:65px;background:#cdcdcd;"></div>
<svg style="position:absolute;left:1296px;top:314px" width="11" height="8" viewBox="0 0 11 8"><polyline points="2.2,6.4 5.5,2.2 8.8,6.4" fill="none" stroke="#404040" stroke-width="2"/></svg>
<svg style="position:absolute;left:1296px;top:497px" width="11" height="8" viewBox="0 0 11 8"><polyline points="2.2,1.6 5.5,5.8 8.8,1.6" fill="none" stroke="#404040" stroke-width="2"/></svg>
<div style="left:585px;top:520px;width:722px;height:80px;background:#f0f0f0;border:1px solid #828790;box-sizing:border-box"></div>
<div style="left:586px;top:521px;width:720px;height:25px;background:#fff;"></div>
<div style="left:742px;top:521px;width:1px;height:24px;background:#ececec;"></div>
<div style="left:900px;top:521px;width:1px;height:24px;background:#ececec;"></div>
<div style="left:990px;top:521px;width:1px;height:24px;background:#ececec;"></div>
<div style="left:1148px;top:521px;width:1px;height:24px;background:#ececec;"></div>
<svg style="position:absolute;left:660px;top:521px" width="10" height="7" viewBox="0 0 10 7"><polyline points="1,5.5 4.7,1.8 8.4,5.5" fill="none" stroke="#3c3c3c" stroke-width="1.15"/></svg>
<span class="t" style="left:590.5px;top:529px;font-size:11px;letter-spacing:-0.457px;color:#000;">System Name</span>
<span class="t" style="left:747.5px;top:529px;font-size:11px;letter-spacing:-0.485px;color:#000;">User Name</span>
<span class="t" style="left:906.2px;top:529px;font-size:11px;letter-spacing:-0.325px;color:#000;">Aspect</span>
<span class="t" style="left:995.0px;top:529px;font-size:11px;letter-spacing:-0.453px;color:#000;">Speed</span>
<span class="t" style="left:1153.3px;top:529px;font-size:11px;letter-spacing:-0.421px;color:#000;">Permissive</span>
<div style="left:586px;top:546px;width:720px;height:15px;background:#fff;"></div>
<div style="left:586px;top:561px;width:720px;height:1px;background:#808080;"></div>
<div style="left:742px;top:546px;width:1px;height:16px;background:#808080;"></div>
<div style="left:900px;top:546px;width:1px;height:16px;background:#808080;"></div>
<div style="left:990px;top:546px;width:1px;height:16px;background:#808080;"></div>
<div style="left:1148px;top:546px;width:1px;height:16px;background:#808080;"></div>
<div style="left:1305px;top:546px;width:1px;height:16px;background:#808080;"></div>
<span class="t" style="left:587.0px;top:548px;font-size:11px;letter-spacing:-0.454px;color:#000;">IB2</span>
<span class="t" style="left:743.5px;top:548px;font-size:11px;letter-spacing:-0.239px;color:#000;">Points 1 2  Bd1</span>
<span class="t" style="left:901.0px;top:548px;font-size:11px;letter-spacing:-0.448px;color:#000;">UnOccupied</span>
<span class="t" style="left:991.0px;top:548px;font-size:11px;letter-spacing:-0.464px;color:#000;">Use Global Normal</span>
<div class="cb" style="left:1221px;top:547px"></div>
</body></html>
